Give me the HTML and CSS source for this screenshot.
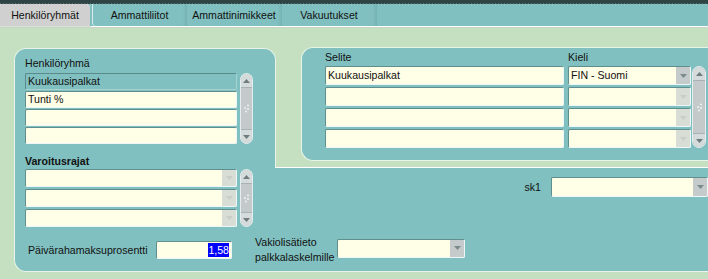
FILE: index.html
```html
<!DOCTYPE html>
<html lang="fi">
<head>
<meta charset="utf-8">
<title>Henkilöryhmät</title>
<link rel="stylesheet" href="styles.css">
</head>
<body>
<div class="topstrip"></div>
<nav class="tabs">
  <div class="tab active">Henkilöryhmät</div>
  <div class="tab first">Ammattiliitot</div>
  <div class="tab">Ammattinimikkeet</div>
  <div class="tab">Vakuutukset</div>
</nav>
<div class="rule-white"></div>
<div class="rule-grey"></div>

<main class="stage">
  <section class="left">
    <div class="lbl">Henkilöryhmä</div>
    <div class="blockrow">
      <div class="list">
        <div class="field cur">Kuukausipalkat</div>
        <div class="field">Tunti %</div>
        <div class="field"></div>
        <div class="field"></div>
      </div>
      <div class="sb">
        <span class="sb-btn up"><svg width="7" height="4" viewBox="0 0 7 4"><path d="M0 4L3.5 0L7 4Z"/></svg></span>
        <span class="sb-grip"><svg width="7" height="9" viewBox="0 0 7 9"><circle cx="5" cy="1.5" r="1"/><circle cx="2" cy="4" r="1"/><circle cx="5" cy="5" r="1"/><circle cx="3" cy="7.5" r="1"/></svg></span>
        <span class="sb-btn down"><svg width="7" height="4" viewBox="0 0 7 4"><path d="M0 0L3.5 4L7 0Z"/></svg></span>
      </div>
    </div>

    <div class="lbl bold">Varoitusrajat</div>
    <div class="blockrow tight">
      <div class="list gap2">
        <div class="field select h18"><span class="val"></span><span class="dd off"><svg width="7" height="4" viewBox="0 0 7 4"><path d="M0 0L3.5 4L7 0Z"/></svg></span></div>
        <div class="field select h18"><span class="val"></span><span class="dd off"><svg width="7" height="4" viewBox="0 0 7 4"><path d="M0 0L3.5 4L7 0Z"/></svg></span></div>
        <div class="field select h18"><span class="val"></span><span class="dd off"><svg width="7" height="4" viewBox="0 0 7 4"><path d="M0 0L3.5 4L7 0Z"/></svg></span></div>
      </div>
      <div class="sb">
        <span class="sb-btn up"><svg width="7" height="4" viewBox="0 0 7 4"><path d="M0 4L3.5 0L7 4Z"/></svg></span>
        <span class="sb-grip"><svg width="7" height="9" viewBox="0 0 7 9"><circle cx="5" cy="1.5" r="1"/><circle cx="2" cy="4" r="1"/><circle cx="5" cy="5" r="1"/><circle cx="3" cy="7.5" r="1"/></svg></span>
        <span class="sb-btn down"><svg width="7" height="4" viewBox="0 0 7 4"><path d="M0 0L3.5 4L7 0Z"/></svg></span>
      </div>
    </div>
  </section>

  <div class="notch">
    <section class="rpanel">
      <div class="rhead"><span class="c1">Selite</span><span>Kieli</span></div>
      <div class="rbody">
        <div class="rcol rcol1">
          <div class="field">Kuukausipalkat</div>
          <div class="field"></div>
          <div class="field"></div>
          <div class="field"></div>
        </div>
        <div class="rcol rcol2">
          <div class="field select"><span class="val">FIN - Suomi</span><span class="dd"><svg width="7" height="4" viewBox="0 0 7 4"><path d="M0 0L3.5 4L7 0Z"/></svg></span></div>
          <div class="field select"><span class="val"></span><span class="dd off"><svg width="7" height="4" viewBox="0 0 7 4"><path d="M0 0L3.5 4L7 0Z"/></svg></span></div>
          <div class="field select"><span class="val"></span><span class="dd off"><svg width="7" height="4" viewBox="0 0 7 4"><path d="M0 0L3.5 4L7 0Z"/></svg></span></div>
          <div class="field select"><span class="val"></span><span class="dd off"><svg width="7" height="4" viewBox="0 0 7 4"><path d="M0 0L3.5 4L7 0Z"/></svg></span></div>
        </div>
        <div class="sb wide">
          <span class="sb-btn up"><svg width="7" height="4" viewBox="0 0 7 4"><path d="M0 4L3.5 0L7 4Z"/></svg></span>
          <span class="sb-grip"><svg width="7" height="9" viewBox="0 0 7 9"><circle cx="5" cy="1.5" r="1"/><circle cx="2" cy="4" r="1"/><circle cx="5" cy="5" r="1"/><circle cx="3" cy="7.5" r="1"/></svg></span>
          <span class="sb-btn down"><svg width="7" height="4" viewBox="0 0 7 4"><path d="M0 0L3.5 4L7 0Z"/></svg></span>
        </div>
      </div>
    </section>
  </div>

  <div class="midright">
    <span class="sk1label">sk1</span>
    <div class="field select sk1"><span class="val"></span><span class="dd"><svg width="7" height="4" viewBox="0 0 7 4"><path d="M0 0L3.5 4L7 0Z"/></svg></span></div>
  </div>

  <div class="bottomrow">
    <span class="plabel">Päivärahamaksuprosentti</span>
    <div class="field num"><span class="sel">1,58</span></div>
    <div class="vlabel">Vakiolisätieto<br>palkkalaskelmille</div>
    <div class="field select vsel"><span class="val"></span><span class="dd"><svg width="7" height="4" viewBox="0 0 7 4"><path d="M0 0L3.5 4L7 0Z"/></svg></span></div>
  </div>
</main>
</body>
</html>
```

FILE: styles.css
```css
html, body {
  margin: 0;
  height: 279px;
  overflow: hidden;
}
body {
  background: #c4e0c0;
  font-family: "Liberation Sans", Arial, sans-serif;
  font-size: 10.6px;
  color: #111;
}

/* top dark strip */
.topstrip {
  height: 4px;
  background-color: #2f4545;
  background-image: repeating-linear-gradient(to right, #5d7272 0 1px, transparent 1px 3px);
  background-size: 100% 1px;
  background-position: 0 3px;
  background-repeat: no-repeat;
}

/* tabs */
.tabs {
  height: 22px;
  background: #80c0c0;
  display: flex;
}
.tab {
  width: 95px;
  box-sizing: border-box;
  display: flex;
  align-items: center;
  justify-content: center;
  border-right: 1px solid #74b4b4;
  box-shadow: inset -3px 0 3px -2px rgba(0, 0, 0, 0.08);
}
.tab.active {
  width: 90px;
  background: #d0d0d0;
  border-right: none;
  box-shadow: none;
  margin-right: 2px;
  border-top-right-radius: 3px;
}
.tab.first {
  border-left: 1px solid #d8ecec;
  border-bottom-left-radius: 4px;
}
.rule-white {
  height: 1px;
  background: linear-gradient(to right, #d6e2d2 0 91px, #ffffff 91px);
}
.rule-grey {
  height: 1px;
  background: #cad4c7;
}

/* main stage */
.stage {
  display: grid;
  grid-template-columns: 262px 1fr;
  grid-template-rows: 121px 64px 40px;
  margin: 19px -12px 0 14px;
}

.left {
  grid-row: 1 / 3;
  grid-column: 1;
  margin-top: 1px;
  background: #80c0c0;
  border: 1px solid #e8f4e8;
  border-bottom: none;
  border-radius: 12px 12px 0 0;
  padding: 8px 0 0 10px;
}

.lbl {
  height: 13px;
  line-height: 13px;
}
.lbl.bold {
  font-weight: bold;
  margin-top: 11px;
}
.blockrow {
  display: flex;
  margin-top: 3px;
}
.blockrow.tight {
  margin-top: 1px;
}
.list {
  width: 212px;
  display: flex;
  flex-direction: column;
  gap: 1px;
}
.list.gap2 {
  gap: 2px;
}

/* fields */
.field {
  box-sizing: border-box;
  height: 17px;
  background: #fffee6;
  border: 1px solid;
  border-color: #5f8e8e #eef7f7 #eef7f7 #5f8e8e;
  border-radius: 2px;
  padding-left: 2px;
  line-height: 15px;
  white-space: nowrap;
  overflow: hidden;
}
.field.cur {
  background: #80c0c0;
  border-color: #5a8a8a #a8d2d2 #a8d2d2 #5a8a8a;
}
.field.h18 {
  height: 18px;
  line-height: 16px;
}
.select {
  display: flex;
}
.select .val {
  flex: 1;
}
.dd {
  width: 14px;
  height: 100%;
  background: #c5cbcb;
  display: flex;
  align-items: center;
  justify-content: center;
}
.dd svg {
  fill: #7b8b8b;
}
.dd.off {
  background: #d8ddd6;
}
.dd.off svg {
  fill: #c8cec8;
}

/* scrollbars */
.sb {
  box-sizing: border-box;
  width: 13px;
  margin-left: 3px;
  border: 1px solid #e4eeee;
  border-radius: 7px;
  background: #c4c9c9;
  display: flex;
  flex-direction: column;
  justify-content: space-between;
  overflow: hidden;
}
.sb.wide {
  width: 14px;
  margin-left: 1px;
}
.sb-btn {
  height: 13px;
  background: #d5dada;
  display: flex;
  align-items: center;
  justify-content: center;
}
.sb-btn.up {
  border-bottom: 1px solid #a9b2b2;
  border-radius: 6px 6px 0 0;
}
.sb-btn.down {
  border-top: 1px solid #a9b2b2;
  border-radius: 0 0 6px 6px;
}
.sb-btn svg {
  fill: #6f7c7c;
}
.sb-grip {
  display: flex;
  justify-content: center;
}
.sb-grip svg {
  fill: #eef3f3;
}

/* right panel area */
.notch {
  grid-row: 1;
  grid-column: 2;
  background: #c4e0c0;
  border-bottom: 1px solid #ffffff;
  padding: 0 0 6px 25px;
}
.rpanel {
  box-sizing: border-box;
  height: 100%;
  background: #80c0c0;
  border: 1px solid #e8f4e8;
  border-right: none;
  border-radius: 12px 0 0 12px;
  padding: 3px 0 0 23px;
}
.rhead {
  display: flex;
  height: 13px;
  line-height: 13px;
}
.rhead .c1 {
  width: 243px;
}
.rbody {
  display: flex;
  margin-top: 2px;
}
.rcol {
  display: flex;
  flex-direction: column;
  gap: 2px;
}
.rcol1 {
  width: 239px;
}
.rcol2 {
  width: 123px;
  margin-left: 4px;
}
.rbody .field {
  height: 19px;
  line-height: 17px;
}

.midright {
  grid-row: 2;
  grid-column: 2;
  margin-left: -1px;
  background: #80c0c0;
  display: flex;
  align-items: flex-start;
  justify-content: flex-end;
  padding: 9px 12px 0 0;
}
.sk1label {
  line-height: 20px;
  margin-right: 10px;
}
.sk1 {
  width: 157px;
  height: 20px;
}

.bottomrow {
  grid-row: 3;
  grid-column: 1 / 3;
  background: #80c0c0;
  border-left: 1px solid #e8f4e8;
  border-bottom: 1px solid #e8f4e8;
  border-radius: 0 0 0 12px;
  display: flex;
  align-items: center;
  padding: 0 0 4px 13px;
}
.plabel {
  width: 128px;
}
.num {
  width: 76px;
  height: 18px;
  line-height: 16px;
  text-align: right;
  padding-right: 2px;
}
.sel {
  background: #0000ff;
  color: #ffffff;
  padding: 1px 0;
}
.vlabel {
  width: 82px;
  margin-left: 23px;
  line-height: 15px;
}
.vsel {
  width: 128px;
  height: 19px;
  margin-bottom: 3px;
}
```
